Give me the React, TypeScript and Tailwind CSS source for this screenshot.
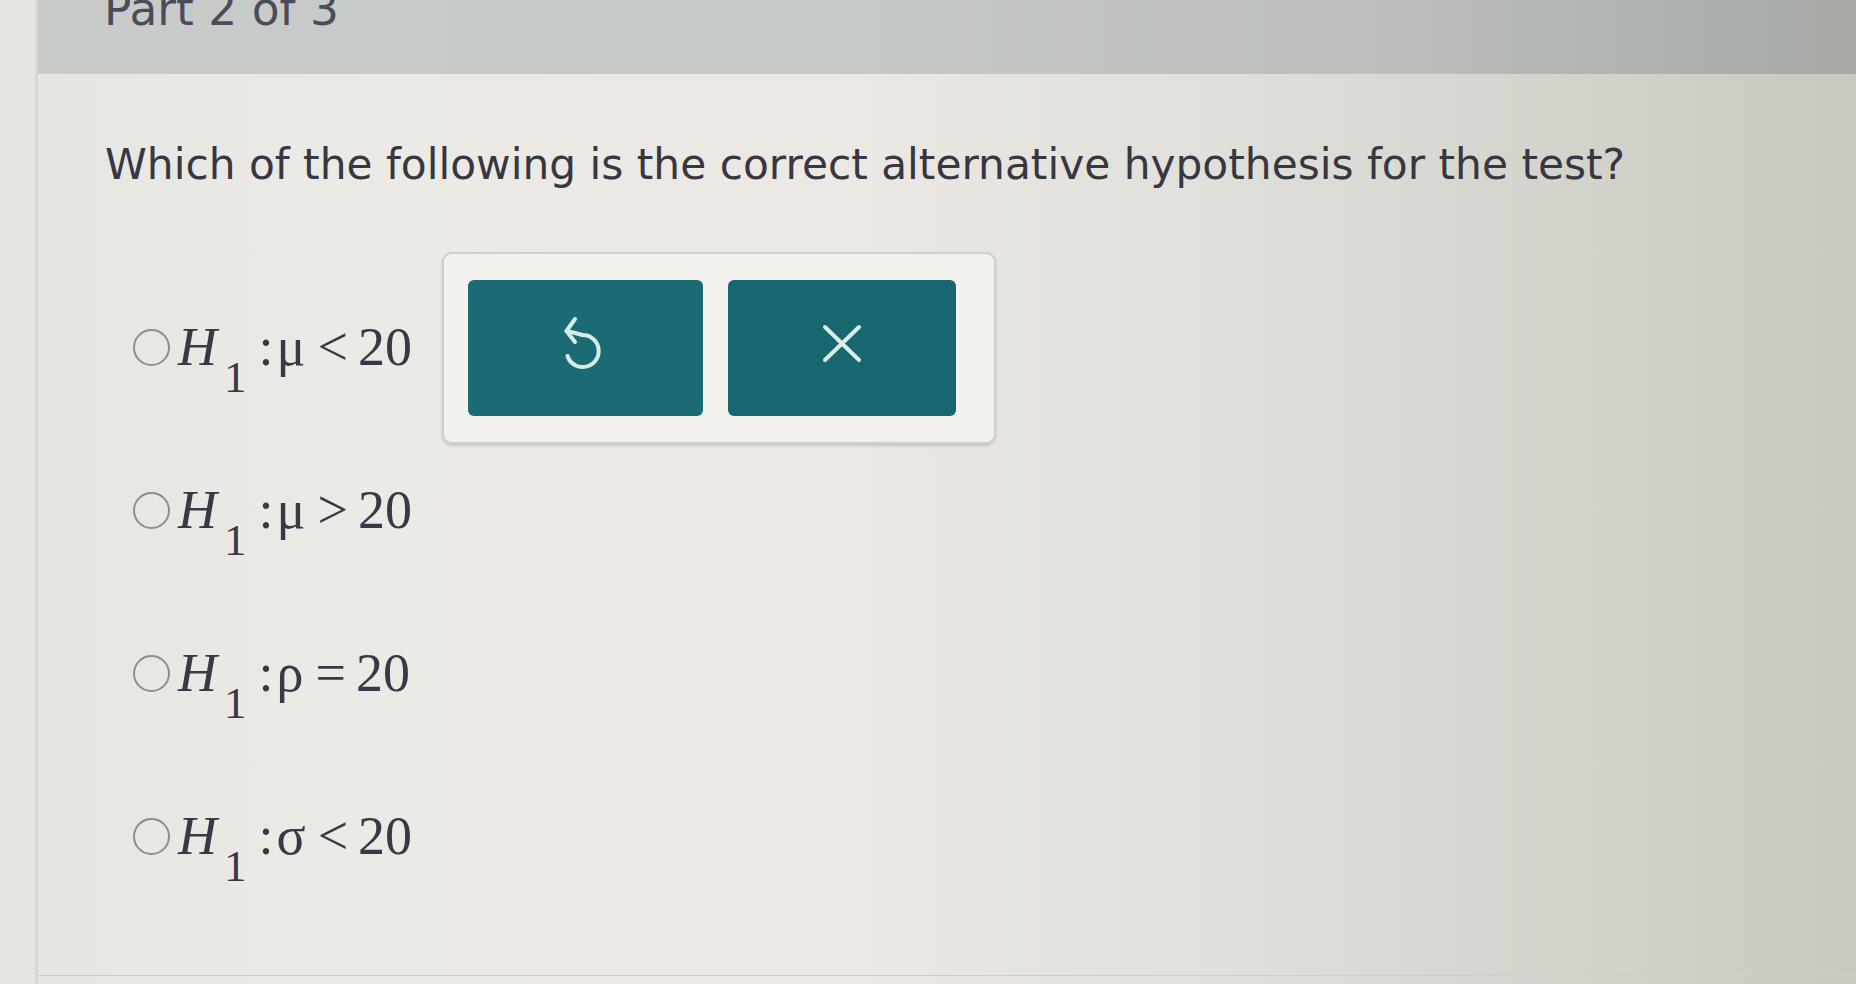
import React from 'react';

const options = [
  { sym: 'μ', rel: '<' },
  { sym: 'μ', rel: '>' },
  { sym: 'ρ', rel: '=' },
  { sym: 'σ', rel: '<' },
];

const UndoIcon = () => (
  <svg width="60" height="72" viewBox="0 0 60 72" fill="none" stroke="#d6ece7" strokeWidth="4" strokeLinecap="round" strokeLinejoin="round" className="-ml-[8px]">
    <path d="M24 7 L15.5 19 L24 30" />
    <path d="M15.5 19 Q25 21 31.5 23 A16 16 0 1 1 16.5 44" />
  </svg>
);

const CloseIcon = () => (
  <svg width="40" height="40" viewBox="0 0 40 40" fill="none" stroke="#d9eee9" strokeWidth="4" strokeLinecap="round" className="-mt-[8px]">
    <path d="M3 3 L37 36" />
    <path d="M37 3 L3 36" />
  </svg>
);

const Hypothesis: React.FC<{ sym: string; rel: string }> = ({ sym, rel }) => (
  <span className="ml-[8px] inline-block h-[53px] whitespace-nowrap font-['Liberation_Serif',serif] text-[54px] leading-[53px] text-[#383947]">
    <i>H</i>
    <span className="ml-[7px] align-[-27px] text-[45px] leading-none">1</span>
    <span className="ml-[12px]">:</span>
    <span className="ml-[3px]">{sym}</span>
    <span className="ml-[12px]">{rel}</span>
    <span className="ml-[10px]">20</span>
  </span>
);

export default function App() {
  return (
    <div className="flex h-[984px] w-[1856px] overflow-hidden font-['DejaVu_Sans',sans-serif]">
      <div className="w-[38px] shrink-0 border-r-[3px] border-[#d6d8d2] bg-[#e3e5df]" />
      <div className="flex flex-1 flex-col">
        <header className="h-[74px] shrink-0 overflow-hidden bg-[linear-gradient(90deg,#c8ccc9_0%,#c5c9c6_45%,#bbbebb_75%,#adb2ae_90%,#a6a9a4_100%)] pl-[66px]">
          <div className="-mt-[13px] text-[45.5px] leading-[45px] text-[#4a4c5a]">Part 2 of 3</div>
        </header>
        <main className="flex flex-1 flex-col bg-[linear-gradient(90deg,#e6e7e1_0%,#eceae5_20%,#ece8e3_45%,#e0dfd9_65%,#d3d3cc_85%,#c8c8c1_100%)]">
          <h1 className="mt-[70px] pl-[67px] text-[42.3px] leading-[42px] text-[#363740]">
            Which of the following is the correct alternative hypothesis for the test?
          </h1>
          <div className="mt-[80px] flex flex-col">
            {options.map((o, i) => (
              <div key={i} className="flex h-[163px] items-center pl-[95px]">
                <span className="h-[37px] w-[37px] shrink-0 rounded-full border-2 border-[#8d8d8d]" />
                <Hypothesis sym={o.sym} rel={o.rel} />
                {i === 0 && (
                  <div className="ml-[30px] flex gap-[25px] rounded-[10px] border-2 border-[#cfcfcb] bg-[#f3f1ed] py-[26px] pl-[24px] pr-[38px] shadow-[0_2px_3px_rgba(0,0,0,0.15)]">
                    <button className="flex h-[136px] w-[235px] items-center justify-center rounded-[6px] bg-[#1a6b74]">
                      <UndoIcon />
                    </button>
                    <button className="flex h-[136px] w-[228px] items-center justify-center rounded-[6px] bg-[#176770]">
                      <CloseIcon />
                    </button>
                  </div>
                )}
              </div>
            ))}
          </div>
          <div className="mt-auto mb-[8px] h-[1px] bg-[#cfcfc8]" />
        </main>
      </div>
    </div>
  );
}
